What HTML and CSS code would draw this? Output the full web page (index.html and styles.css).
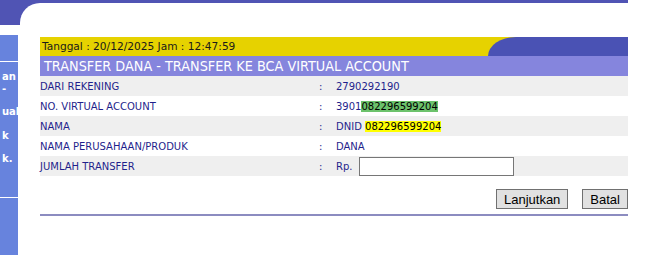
FILE: index.html
```html
<!DOCTYPE html>
<html>
<head>
    <meta charset="UTF-8">
    <title>Transfer ke BCA Virtual Account</title>
    <link rel="stylesheet" href="styles.css">
</head>
<body>
    <div class="top">
        <div class="top-inner"></div>
    </div>

    <div class="layout">
        <div class="side">
            <div class="side-head"></div>
            <div class="side-menu">
                <div class="side-line">an</div>
                <div class="side-line">-</div>
                <div class="side-line">&nbsp;</div>
                <div class="side-line">ual</div>
                <div class="side-line">&nbsp;</div>
                <div class="side-line">k</div>
                <div class="side-line">&nbsp;</div>
                <div class="side-line">k.</div>
            </div>
        </div>

        <main class="content">
            <div class="datebar">
                <div class="date">Tanggal : 20/12/2025 Jam : 12:47:59</div>
                <div class="date-curve"></div>
            </div>
            <div class="title">TRANSFER DANA - TRANSFER KE BCA VIRTUAL ACCOUNT</div>

            <table class="form">
                <tr class="odd">
                    <td class="label">DARI REKENING</td>
                    <td class="colon">:</td>
                    <td>2790292190</td>
                </tr>
                <tr>
                    <td class="label">NO. VIRTUAL ACCOUNT</td>
                    <td class="colon">:</td>
                    <td>3901<span class="hl-green">082296599204</span></td>
                </tr>
                <tr class="odd">
                    <td class="label">NAMA</td>
                    <td class="colon">:</td>
                    <td>DNID <span class="hl-yellow">082296599204</span></td>
                </tr>
                <tr>
                    <td class="label">NAMA PERUSAHAAN/PRODUK</td>
                    <td class="colon">:</td>
                    <td>DANA</td>
                </tr>
                <tr class="odd">
                    <td class="label">JUMLAH TRANSFER</td>
                    <td class="colon">:</td>
                    <td><span class="rp">Rp.</span><input class="amount" type="text"></td>
                </tr>
            </table>

            <div class="actions">
                <button class="btn">Lanjutkan</button>
                <button class="btn">Batal</button>
            </div>
            <div class="rule"></div>
        </main>
    </div>
</body>
</html>
```

FILE: styles.css
```css
body {
    margin: 0;
    background-color: #fff;
    font-family: "DejaVu Sans", Verdana, sans-serif;
}
.top {
    width: 628px;
    height: 25px;
    padding: 3px 0 0 20px;
    box-sizing: border-box;
    background-color: #5054b4;
}
.top-inner {
    height: 22px;
    background-color: #fff;
    border-top-left-radius: 20px;
}
.layout {
    display: flex;
    gap: 22px;
    min-height: 230px;
}
.side {
    width: 18px;
    margin-top: 10px;
    background-color: #6783dd;
    overflow: hidden;
}
.side-head {
    height: 26px;
    border-bottom: 1px solid #fff;
}
.side-menu {
    padding: 9px 0 32px 2px;
    border-bottom: 1px solid #fff;
    color: #fff;
    font-size: 10px;
    font-weight: bold;
    line-height: 11.7px;
    white-space: nowrap;
}
.content {
    width: 588px;
    margin-top: 12px;
}
.datebar {
    display: flex;
    height: 19px;
    background-color: #e6d200;
}
.date {
    flex: 1;
    padding-left: 2px;
    font-size: 10.6px;
    line-height: 19px;
    color: #1a1a1a;
}
.date-curve {
    width: 140px;
    background-color: #4a52b4;
    border-top-left-radius: 28px 19px;
}
.title {
    height: 20px;
    padding: 1px 0 0 4px;
    box-sizing: border-box;
    background-color: #8585dd;
    color: #fff;
    font-family: "DejaVu Sans Condensed", "DejaVu Sans", sans-serif;
    font-size: 14.3px;
    line-height: 19px;
}
.form {
    width: 100%;
    border-collapse: collapse;
    font-size: 10px;
    color: #1f1f8c;
}
.form td {
    height: 19px;
    padding: 1px 0 0;
}
.form tr.odd {
    background-color: #efefef;
}
.form .label {
    width: 276px;
}
.form .colon {
    width: 17px;
    padding-left: 3px;
}
.hl-green {
    background-color: #6cc26c;
    color: #000;
}
.hl-yellow {
    background-color: #ffff00;
    color: #000;
}
.rp {
    display: inline-block;
    width: 23px;
}
.amount {
    width: 155px;
    height: 19px;
    box-sizing: border-box;
    margin: 0;
    padding: 0 2px;
    border: 1px solid #767676;
    vertical-align: middle;
}
.actions {
    display: flex;
    justify-content: flex-end;
    gap: 14px;
    margin-top: 13px;
}
.btn {
    height: 20px;
    padding: 0 7px;
    background-color: #e1e1e1;
    border: 1px solid #707070;
    color: #000;
    font-family: "Liberation Sans", Arial, sans-serif;
    font-size: 13px;
}
.rule {
    height: 2px;
    margin-top: 5px;
    background-color: #8c8cc0;
}
```
